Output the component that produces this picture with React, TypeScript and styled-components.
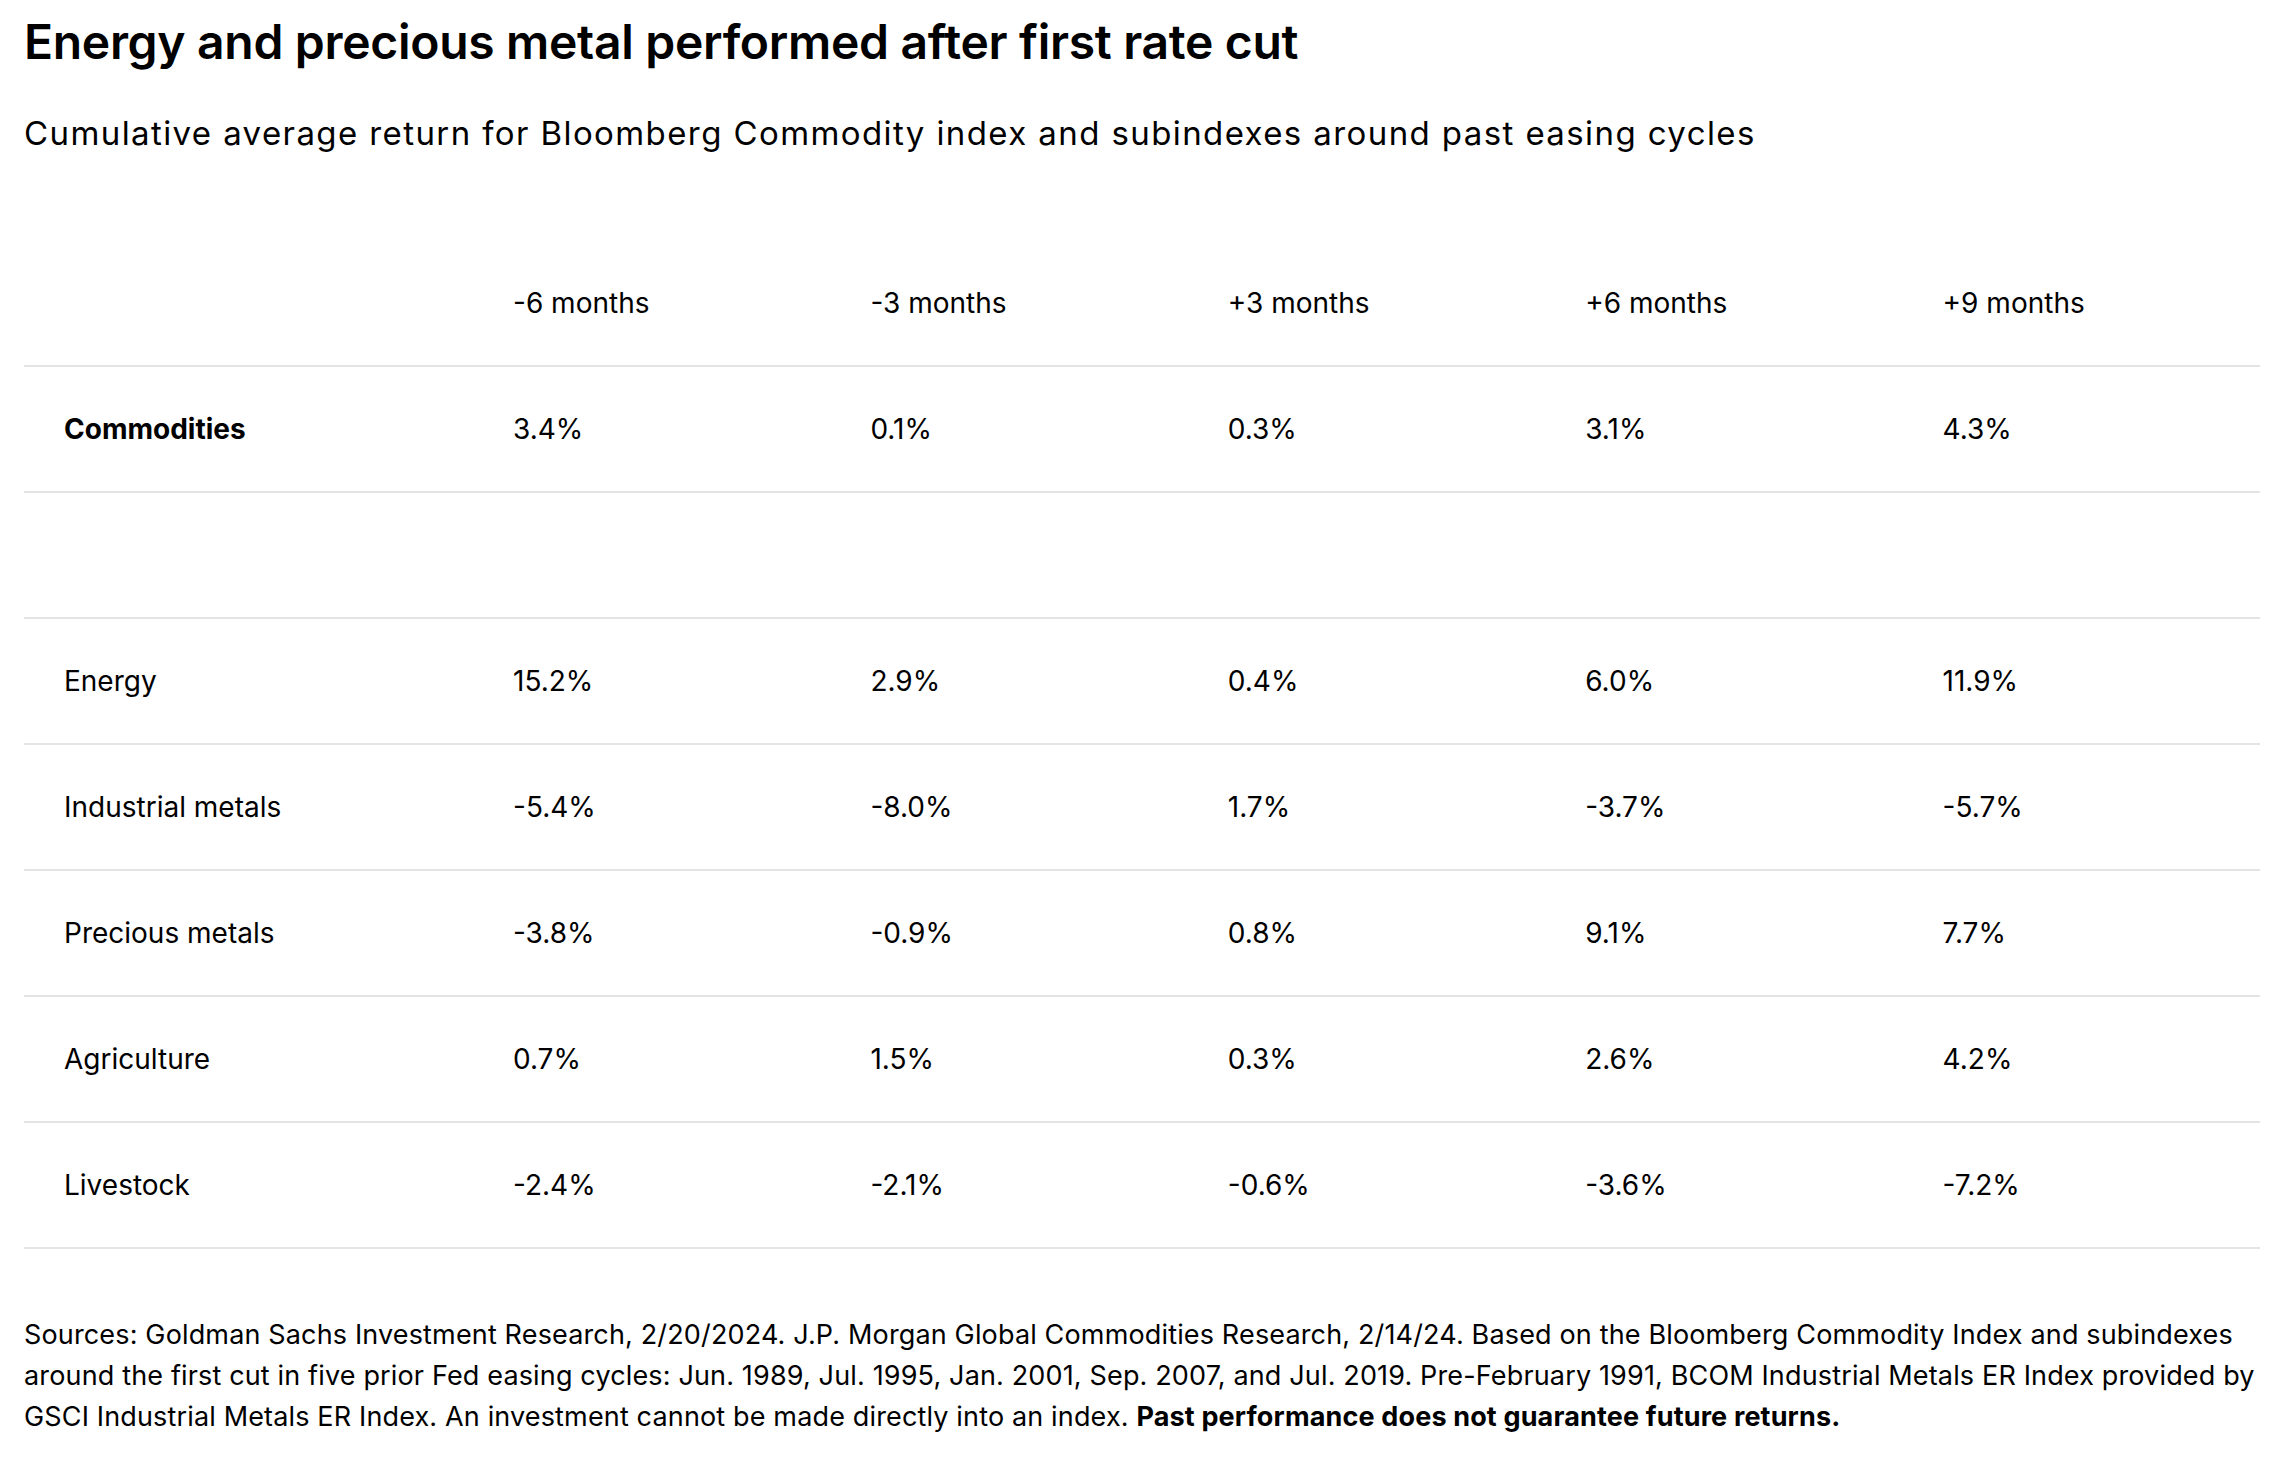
import React from 'react';
import styled, { createGlobalStyle } from 'styled-components';

const GlobalStyle = createGlobalStyle`
  html, body {
    margin: 0;
    padding: 0;
    background: #ffffff;
  }
  body {
    font-family: Inter, 'Liberation Sans', Arial, sans-serif;
    color: #000000;
    -webkit-font-smoothing: antialiased;
  }
`;

const Page = styled.div`
  padding: 12px 24px 0;
  width: 2284px;
  box-sizing: border-box;
`;

const Title = styled.h1`
  margin: 0;
  font-size: 48px;
  line-height: 60px;
  font-weight: 600;
  letter-spacing: -0.3px;
`;

const Subtitle = styled.p`
  margin: 41px 0 0;
  font-size: 33px;
  line-height: 40px;
  font-weight: 400;
  letter-spacing: 1.4px;
`;

const Table = styled.div`
  margin-top: 88px;
  display: flex;
  flex-direction: column;
`;

const Row = styled.div`
  display: grid;
  grid-template-columns: 449px repeat(5, 1fr);
  height: 124px;
  align-items: center;
  border-bottom: 2px solid #e4e4e4;
`;

const Cell = styled.div<{ $bold?: boolean }>`
  padding-left: 40px;
  font-size: 28px;
  line-height: 36px;
  font-weight: ${p => (p.$bold ? 700 : 400)};
  white-space: nowrap;
`;

const Footnote = styled.p`
  margin: 65px -12px 0 0;
  font-size: 27px;
  line-height: 41px;
  font-weight: 400;
  letter-spacing: 0.15px;
`;

const Strong = styled.strong`
  font-weight: 700;
`;

const periods = ['-6 months', '-3 months', '+3 months', '+6 months', '+9 months'];

type Line = { label: string; values: string[]; bold?: boolean } | null;

const lines: Line[] = [
  { label: 'Commodities', values: ['3.4%', '0.1%', '0.3%', '3.1%', '4.3%'], bold: true },
  null,
  { label: 'Energy', values: ['15.2%', '2.9%', '0.4%', '6.0%', '11.9%'] },
  { label: 'Industrial metals', values: ['-5.4%', '-8.0%', '1.7%', '-3.7%', '-5.7%'] },
  { label: 'Precious metals', values: ['-3.8%', '-0.9%', '0.8%', '9.1%', '7.7%'] },
  { label: 'Agriculture', values: ['0.7%', '1.5%', '0.3%', '2.6%', '4.2%'] },
  { label: 'Livestock', values: ['-2.4%', '-2.1%', '-0.6%', '-3.6%', '-7.2%'] },
];

export default function App() {
  return (
    <Page>
      <GlobalStyle />
      <Title>Energy and precious metal performed after first rate cut</Title>
      <Subtitle>
        Cumulative average return for Bloomberg Commodity index and subindexes around past easing cycles
      </Subtitle>

      <Table>
        <Row>
          <Cell />
          {periods.map(p => (
            <Cell key={p}>{p}</Cell>
          ))}
        </Row>
        {lines.map((line, i) =>
          line ? (
            <Row key={line.label}>
              <Cell $bold={line.bold}>{line.label}</Cell>
              {line.values.map((v, j) => (
                <Cell key={j}>{v}</Cell>
              ))}
            </Row>
          ) : (
            <Row key={`blank-${i}`} />
          )
        )}
      </Table>

      <Footnote>
        Sources: Goldman Sachs Investment Research, 2/20/2024. J.P. Morgan Global Commodities Research, 2/14/24.
        Based on the Bloomberg Commodity Index and subindexes around the first cut in five prior Fed easing cycles:
        Jun. 1989, Jul. 1995, Jan. 2001, Sep. 2007, and Jul. 2019. Pre-February 1991, BCOM Industrial Metals ER
        Index provided by GSCI Industrial Metals ER Index. An investment cannot be made directly into an index.{' '}
        <Strong>Past performance does not guarantee future returns.</Strong>
      </Footnote>
    </Page>
  );
}
